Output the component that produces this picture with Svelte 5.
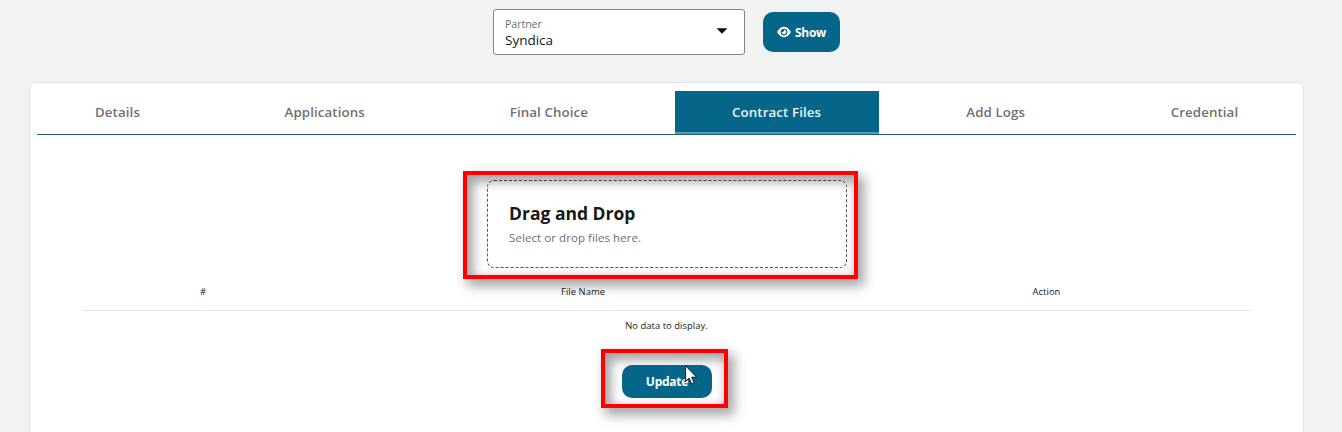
<script>
  const tabs = [
    { label: 'Details', width: 161 },
    { label: 'Applications', width: 197 },
    { label: 'Final Choice', width: 195 },
    { label: 'Contract Files', width: 204 },
    { label: 'Add Logs', width: 178 },
    { label: 'Credential', width: 183 }
  ];
  let active = $state('Contract Files');
</script>

<div class="page">
  <header class="toolbar">
    <div class="select">
      <div class="field">
        <span class="caption">Partner</span>
        <span class="value">Syndica</span>
      </div>
      <svg class="caret" width="12" height="6" viewBox="0 0 12 6"><path d="M0.5 0.3H11.5L6 5.8Z" fill="#111" /></svg>
    </div>
    <button class="btn show">
      <svg width="14" height="12" viewBox="0 0 576 512"><path fill="#fff" d="M288 32c-80.800 0-145.500 36.800-192.600 80.600C48.600 156 17.300 208 2.500 243.700c-3.300 7.900-3.300 16.700 0 24.600C17.300 304 48.600 356 95.400 399.400C142.500 443.200 207.200 480 288 480s145.500-36.800 192.600-80.600c46.800-43.500 78.100-95.400 93-131.100c3.300-7.900 3.300-16.700 0-24.600c-14.900-35.700-46.200-87.700-93-131.100C433.500 68.800 368.800 32 288 32zM144 256a144 144 0 1 1 288 0a144 144 0 1 1-288 0zm144-64c0 35.300-28.700 64-64 64c-7.100 0-13.900-1.200-20.300-3.300c-5.500-1.800-11.900 1.600-11.700 7.400c.3 6.900 1.300 13.800 3.200 20.700c13.700 51.200 66.400 81.600 117.600 67.900s81.600-66.400 67.900-117.600c-11.100-41.500-47.800-69.400-88.600-71.100c-5.800-.2-9.200 6.100-7.400 11.700c2.100 6.400 3.300 13.200 3.300 20.300z" /></svg>
      <span>Show</span>
    </button>
  </header>

  <main class="card">
    <nav class="tabs">
      {#each tabs as tab}
        <button class="tab" class:active={tab.label === active} style:width="{tab.width}px" onclick={() => (active = tab.label)}>{tab.label}</button>
      {/each}
    </nav>

    <section class="upload">
      <div class="dropzone">
        <h2>Drag and Drop</h2>
        <p>Select or drop files here.</p>
      </div>
      <div class="mark"></div>
    </section>

    <div class="table">
      <div class="row head"><span>#</span><span>File Name</span><span>Action</span></div>
      <div class="empty">No data to display.</div>
    </div>

    <div class="actions">
      <div class="mark"></div>
      <button class="btn update">Update</button>
      <svg class="cursor" width="13" height="21" viewBox="0 0 13 21"><path d="M.6 .8V16.300L4.100 13.100L6.700 19L9.200 17.900L6.700 12.200H11.600Z" fill="#fff" stroke="#111b22" stroke-width="1" /></svg>
    </div>
  </main>
</div>

<style>
  :global(body) { margin: 0; background: #f1f3f3; }
  .page {
    box-sizing: border-box;
    height: 432px;
    overflow: hidden;
    padding-top: 9px;
    font-family: "Open Sans", "Noto Sans", sans-serif;
    color: #181818;
  }
  button { font-family: inherit; border: 0; padding: 0; cursor: pointer; }
  .toolbar { display: flex; align-items: center; gap: 18px; height: 46px; margin-left: 493px; }
  .select {
    box-sizing: border-box;
    width: 252px;
    height: 46px;
    display: flex;
    align-items: center;
    justify-content: space-between;
    padding: 0 16px 0 11px;
    background: #fff;
    border: 1px solid #858585;
    border-radius: 3px;
  }
  .field { display: flex; flex-direction: column; padding-top: 1px; }
  .caption { font-size: 10.5px; line-height: 14px; color: #6b6b6b; }
  .value { font-size: 13.5px; line-height: 18px; }
  .caret { margin-top: -3px; }
  .btn {
    display: flex;
    align-items: center;
    justify-content: center;
    color: #fff;
    font-weight: 700;
    font-size: 12px;
    background: #056689;
    border-radius: 10px;
  }
  .show { width: 77px; height: 40px; gap: 4px; letter-spacing: -0.3px; }
  .card {
    box-sizing: border-box;
    width: 1275px;
    height: 380px;
    margin: 27px 0 0 29px;
    padding: 8px 7px 0;
    background: #fff;
    border: 1px solid #e4e5e5;
    border-radius: 6px;
  }
  .tabs { display: flex; justify-content: space-between; height: 43px; border-bottom: 1px solid #265f72; }
  .tab {
    box-sizing: border-box;
    height: 43px;
    border-bottom: 2px solid transparent;
    background: none;
    color: #707070;
    font-size: 13.3px;
    font-weight: 600;
    letter-spacing: 0.1px;
  }
  .tab.active { background: #056689; border-bottom-color: #4b9dc0; color: #e8f6fa; }
  .upload { position: relative; width: 394.5px; height: 108px; margin: 36px 0 0 426px; }
  .dropzone {
    box-sizing: border-box;
    width: 360px;
    height: 88px;
    position: relative;
    top: 9px;
    margin-left: 24px;
    padding: 20px 21px 0;
    border: 1px dashed #555;
    border-radius: 7px;
  }
  h2 { margin: 0; font-size: 17.5px; line-height: 24px; font-weight: 700; }
  p { margin: 5px 0 0; font-size: 11.6px; line-height: 16px; letter-spacing: 0.03px; color: #6f6f6f; }
  .mark {
    position: absolute;
    inset: 0;
    border: 4px solid #f00;
    box-shadow: 5px 6px 11px 1px rgba(0, 0, 0, 0.36), inset 4px 5px 11px 2px rgba(0, 0, 0, 0.36);
  }
  .table { margin: 0 45px; font-size: 9.4px; }
  .row { display: grid; grid-template-columns: 242px 518px 1fr; height: 31px; border-bottom: 1px solid #e2e2e2; text-align: center; line-height: 26px; font-weight: 500; letter-spacing: 0.05px; }
  .empty { height: 30px; line-height: 30px; text-align: center; letter-spacing: 0.05px; }
  .actions { position: relative; width: 127px; height: 59px; margin: 8px 0 0 564px; }
  .update { position: relative; width: 90px; height: 33px; top: 16px; margin-left: 21px; letter-spacing: -0.25px; }
  .cursor { position: absolute; left: 84px; top: 16px; }
</style>
